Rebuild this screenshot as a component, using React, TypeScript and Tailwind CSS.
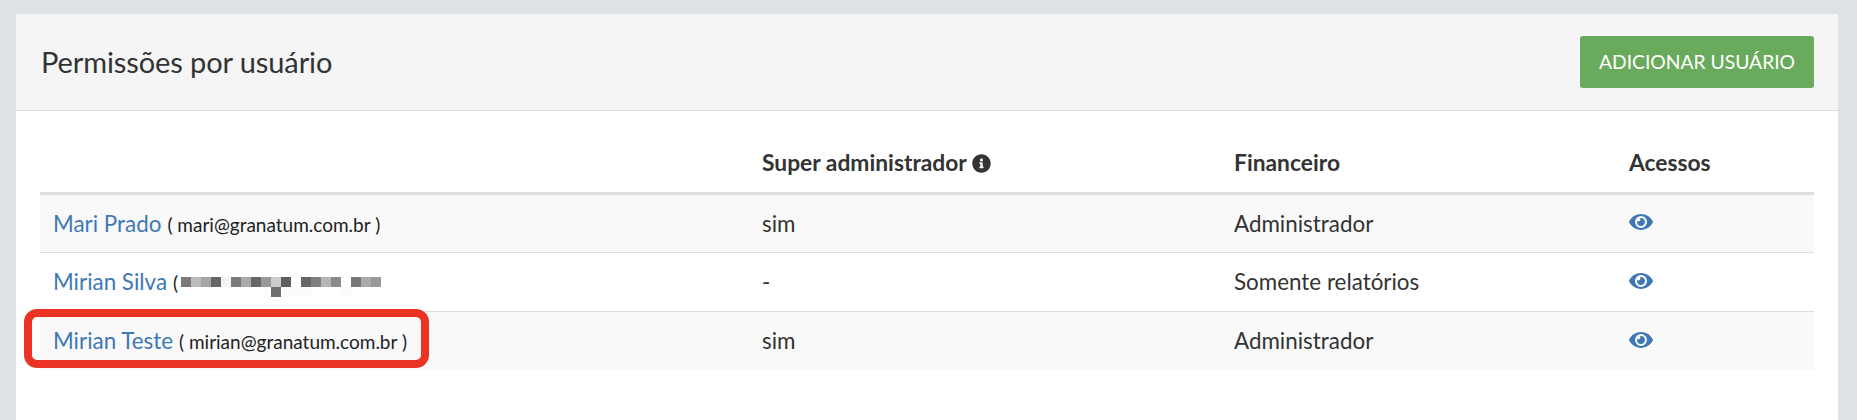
import { FaEye, FaInfoCircle } from 'react-icons/fa';

interface Row {
  name: string;
  email?: string;
  superAdmin: string;
  finance: string;
  striped: boolean;
}

const rows: Row[] = [
  { name: 'Mari Prado', email: 'mari@granatum.com.br', superAdmin: 'sim', finance: 'Administrador', striped: true },
  { name: 'Mirian Silva', superAdmin: '-', finance: 'Somente relatórios', striped: false },
  { name: 'Mirian Teste', email: 'mirian@granatum.com.br', superAdmin: 'sim', finance: 'Administrador', striped: true },
];

// mosaic that hides the e-mail in the second row
const mosaicTop = ['#7a7a7a', '#bbbbbb', '#a5a5a5', '#666666', '#f3f3f3', '#7a7a7a', '#aaaaaa', '#666666', '#999999', '#cccccc', '#5f5f5f', '#ffffff', '#666666', '#808080', '#b5b5b5', '#8a8a8a', '#ffffff', '#777777', '#aaaaaa', '#999999'];
const mosaicBottom = ['#ffffff', '#ffffff', '#ffffff', '#ffffff', '#ffffff', '#ffffff', '#ffffff', '#ffffff', '#ffffff', '#707070', '#fbfbfb', '#fbfbfb', '#fbfbfb', '#ffffff', '#ffffff', '#ffffff', '#fbfbfb', '#ffffff', '#ffffff', '#ffffff'];

function Mosaic() {
  return (
    <span className="inline-flex flex-col align-[3px] -my-[10px]">
      {[mosaicTop, mosaicBottom].map((line, i) => (
        <span key={i} className="flex">
          {line.map((color, j) => (
            <span key={j} className="block w-[10px] h-[10px]" style={{ backgroundColor: color }} />
          ))}
        </span>
      ))}
    </span>
  );
}

export default function App() {
  return (
    <div className="h-[420px] overflow-hidden bg-[#dde2e5] pt-[14px] pl-[16px] pr-[19px] font-['Lato','Noto_Sans',sans-serif] text-[#333333]">
      <div className="relative h-[420px] bg-white rounded-t-[3px]">
        <div className="h-[97px] flex items-center justify-between pl-[25px] pr-[24px] bg-[#f5f5f5] border-b border-[#dddddd]">
          <h3 className="text-[29px] leading-none -mt-[2px] tracking-[-0.1px]">Permissões por usuário</h3>
          <button className="w-[234px] h-[52px] rounded-[3px] bg-[#6aaa5d] text-white text-[19.3px] uppercase">
            Adicionar usuário
          </button>
        </div>

        <div className="px-[24px] pt-[27px]">
          <table className="w-full table-fixed border-collapse text-[22.4px]">
            <thead>
              <tr className="h-[55px] border-b-[3px] border-[#dddddd] text-left text-[22.8px]">
                <th className="w-[709px]" />
                <th className="w-[472px] px-[13px] pb-[6px] font-bold">
                  Super administrador <FaInfoCircle className="inline w-[19px] h-[19px] align-[-2px]" />
                </th>
                <th className="w-[395px] px-[13px] pb-[6px] font-bold">Financeiro</th>
                <th className="px-[13px] pb-[6px] font-bold">Acessos</th>
              </tr>
            </thead>
            <tbody>
              {rows.map((row, i) => (
                <tr key={row.name} className={`h-[59px] ${i < 2 ? 'border-b border-[#dddddd]' : ''} ${row.striped ? 'bg-[#f9f9f9]' : 'bg-white'}`}>
                  <td className="px-[13px] pt-[1px] whitespace-nowrap">
                    <a className="text-[#4078b5]">{row.name}</a>
                    {row.email ? (
                      <span className="text-[#222222] text-[19px] ml-[6px]">( {row.email} )</span>
                    ) : (
                      <>
                        <span className="text-[#222222] text-[19px] ml-[6px]">(</span>
                        <span className="ml-[3px]"><Mosaic /></span>
                      </>
                    )}
                  </td>
                  <td className="px-[13px] pt-[1px]">{row.superAdmin}</td>
                  <td className="px-[13px] pt-[1px]">{row.finance}</td>
                  <td className="px-[13px]">
                    <FaEye className="w-[24px] h-[24px] text-[#4078b5] -mt-[2px]" />
                  </td>
                </tr>
              ))}
            </tbody>
          </table>
        </div>

        {/* red annotation around the last row */}
        <div className="absolute left-[8px] top-[295px] w-[405px] h-[59px] border-[8px] border-[#ea3323] rounded-[13px]" />
      </div>
    </div>
  );
}
